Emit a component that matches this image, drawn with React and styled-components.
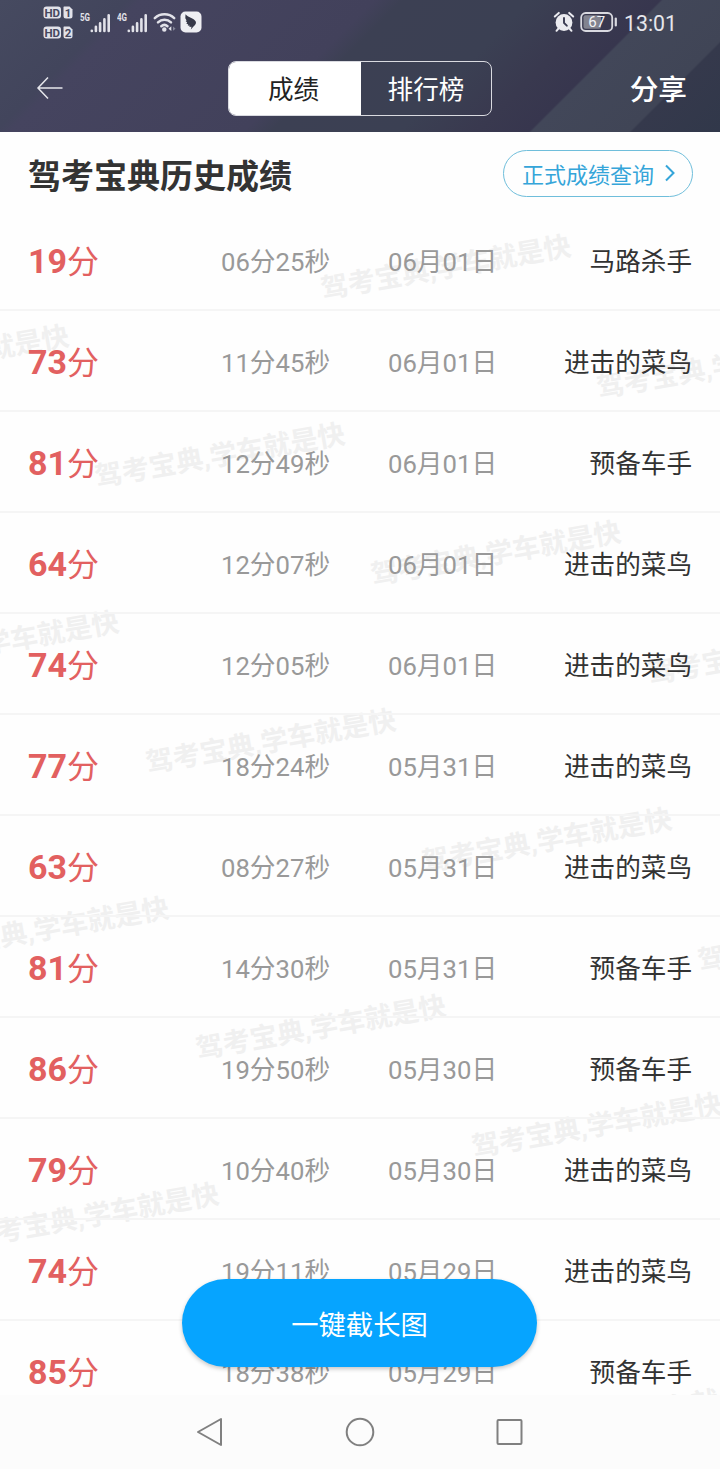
import React from 'react'
import styled, { createGlobalStyle } from 'styled-components'

const GlobalStyle = createGlobalStyle`
* { box-sizing: border-box; }
body { margin: 0; background: #fff; }
button { font: inherit; border: 0; padding: 0; background: none; cursor: pointer; }
`

const Screen = styled.div`
  position: relative;
  display: flex;
  flex-direction: column;
  width: 720px;
  height: 1469px;
  overflow: hidden;
  background: #fefefe;
  color: #333;
  font-family: Roboto, 'Noto Sans CJK SC', sans-serif;
  white-space: nowrap;
`

const Header = styled.header`
  flex: none;
  height: 132px;
  color: #fff;
  background: linear-gradient(
    135deg,
    #464a60 0,
    #42455c 90px,
    #45445f 100px,
    #42415b 265px,
    #3c4053 285px,
    #3b4053 375px,
    #39394f 430px,
    #37364e 467px,
    #424759 469px,
    #404556 538px,
    #35394c 540px,
    #31384a 603px
  );
`

const StatusBar = styled.div`
  display: flex;
  justify-content: space-between;
  height: 44px;
  padding: 0 43px;
`

const StatusGroup = styled.div`
  display: flex;
  align-items: center;
  gap: ${p => p.$gap || 0}px;
`

const HdStack = styled.div`
  display: grid;
  gap: 7px;
  margin-right: 1px;
`

const Clock = styled.span`
  font-size: 21.3px;
  line-height: 40px;
  padding-top: 3px;
  margin-left: 1px;
  width: 53px;
  color: #e6e6ec;
`

const NavBar = styled.div`
  display: grid;
  grid-template-columns: 200px 264px 200px;
  align-items: center;
  height: 88px;
  padding: 0 28px;
`

const BackButton = styled.button`
  display: flex;
  padding-left: 8px;
`

const Share = styled.button`
  justify-self: end;
  margin: 4px 5px 0 0;
  font-size: 28.7px;
  font-weight: 500;
  line-height: 40px;
  color: #fff;
`

const Tabs = styled.div`
  display: flex;
  height: 55px;
  border: 1px solid #d9dae0;
  border-radius: 8px;
  overflow: hidden;
`

const Tab = styled.button`
  width: ${p => (p.$active ? 132 : 130)}px;
  padding-top: 4px;
  padding-right: ${p => (p.$active ? 3 : 0)}px;
  font-size: 25.6px;
  line-height: 49px;
  color: ${p => (p.$active ? '#222' : '#fff')};
  background: ${p => (p.$active ? '#fff' : 'transparent')};
`

const TitleBar = styled.div`
  flex: none;
  display: flex;
  align-items: center;
  justify-content: space-between;
  height: 78px;
  padding: 5px 27px 0 28px;
`

const Title = styled.h1`
  margin: 6px 0 0;
  font-size: 33px;
  line-height: 44px;
  font-weight: 700;
`

const QueryLink = styled.button`
  display: flex;
  align-items: center;
  gap: 10px;
  width: 190px;
  height: 47px;
  padding: 0 0 2px 18px;
  border: 1px solid #6fbedb;
  border-radius: 24px;
  font-size: 22px;
  color: #35a5d9;
`

const List = styled.main`
  position: relative;
  height: 1185px;
  overflow: hidden;
`

const Row = styled.div`
  position: relative;
  display: grid;
  grid-template-columns: 193px 167px 1fr auto;
  align-items: center;
  height: 101px;
  padding: 0 28px 1px;
  border-bottom: 2px solid #f5f5f5;
`

const Score = styled.div`
  display: flex;
  align-items: center;
  font-size: 32px;
  color: #e26060;

  b {
    width: 39px;
    padding-top: 4px;
    font-size: 34px;
  }
`

const Meta = styled.div`
  font-size: 25.7px;
  color: #999;
`

const Rank = styled.div`
  font-size: 25.6px;
  color: #333;
`

/* slanted marks running under the rows */
const Mark = styled.span`
  position: absolute;
  left: ${p => p.$x - 150}px;
  top: ${p => p.$y - 229}px;
  width: 300px;
  height: 40px;
  line-height: 40px;
  text-align: center;
  font-size: 27.4px;
  font-weight: 700;
  color: #f0f0f0;
  transform: rotate(-10deg);
`

const LongShot = styled.button`
  position: absolute;
  left: 182px;
  bottom: 102px;
  width: 355px;
  height: 88px;
  padding-bottom: 1px;
  border-radius: 44px;
  font-size: 27.3px;
  color: #fff;
  background: #06a4ff;
  box-shadow: 0 2px 4px rgba(0, 0, 0, 0.22);
`

const SystemNav = styled.nav`
  flex: none;
  display: flex;
  align-items: center;
  justify-content: center;
  gap: 120px;
  height: 74px;
  background: #fcfcfc;
`

const rows = [
  ['19', '06分25秒', '06月01日', '马路杀手'],
  ['73', '11分45秒', '06月01日', '进击的菜鸟'],
  ['81', '12分49秒', '06月01日', '预备车手'],
  ['64', '12分07秒', '06月01日', '进击的菜鸟'],
  ['74', '12分05秒', '06月01日', '进击的菜鸟'],
  ['77', '18分24秒', '05月31日', '进击的菜鸟'],
  ['63', '08分27秒', '05月31日', '进击的菜鸟'],
  ['81', '14分30秒', '05月31日', '预备车手'],
  ['86', '19分50秒', '05月30日', '预备车手'],
  ['79', '10分40秒', '05月30日', '进击的菜鸟'],
  ['74', '19分11秒', '05月29日', '进击的菜鸟'],
  ['85', '18分38秒', '05月29日', '预备车手'],
]

const marks = [
  [446, 267], [-56, 357], [722, 366], [220, 455], [496, 553], [-6, 643],
  [773, 652], [271, 741], [547, 840], [44, 929], [823, 939], [321, 1027],
  [597, 1125], [94, 1215], [371, 1313], [648, 1412],
]

const HdBadge = ({ n }) => (
  <svg width="31" height="13" viewBox="0 0 31 13">
    <rect x="0.5" y="0.5" width="17.5" height="12" rx="3" fill="#e2e2e9" />
    <path d="M21 .5h5.500l3 3V10a2.500 2.500 0 0 1-2.500 2.500H23A2.500 2.500 0 0 1 20.500 10V1z" fill="#e2e2e9" />
    <text x="9.2" y="10.6" textAnchor="middle" fontSize="11.5" fontWeight="700" fill="#45475f" fontFamily="Roboto">HD</text>
    <text x="25" y="10.6" textAnchor="middle" fontSize="11.5" fontWeight="700" fill="#45475f" fontFamily="Roboto">{n}</text>
  </svg>
)

const Signal = ({ type }) => (
  <svg width="32" height="24" viewBox="0 0 32 24">
    <text x="0" y="11" fontSize="11" fontWeight="700" fill="#e2e2e9" fontFamily="Roboto" textLength="10" lengthAdjust="spacingAndGlyphs">{type}</text>
    <g stroke="#e2e2e9" strokeWidth="2.6" strokeLinecap="round">
      <path d="M11.800 23.200v.2M15.900 19.300v4.100M20.100 15.900v7.500M24.400 11.900v11.500M28.700 7.800v15.600" transform="translate(0 -2.500)" />
    </g>
  </svg>
)

const Wifi = () => (
  <svg width="24" height="22" viewBox="0 0 24 22" fill="none" stroke="#e2e2e9" strokeWidth="2.5" strokeLinecap="round">
    <path d="M1.800 7.200a14.200 14.200 0 0 1 19.400 0M5 11.400a9.600 9.600 0 0 1 13 0M8.300 15.200a4.700 4.700 0 0 1 6.200 0" />
    <circle cx="11.300" cy="18.500" r="1" fill="#e2e2e9" />
    <path d="M18.300 15.300l-2.800 2.500 2.800 2.300z" fill="#e2e2e9" stroke="none" />
    <path d="M20 15.500l2.600 2.300-2.600 2z" fill="#85879a" stroke="none" />
  </svg>
)

const BirdBadge = () => (
  <svg width="22" height="22" viewBox="0 0 22 22">
    <rect x="0.5" y="0.5" width="21" height="21" rx="5" fill="#eeeef2" />
    <path d="M5.500 3.200C7.800 6 14 7.400 15.600 10.200c.7 1.300.4 2.500-.6 3.700l-1.500 1.700-2.700 2.800.7-2.700-2.300.4.700-1.300-2.200-.2.600-1.200-2-.8.900-1-1.600-1.600 1-.5-1.300-2.300z" fill="#363848" />
  </svg>
)

const Alarm = () => (
  <svg width="22" height="22" viewBox="0 0 22 22">
    <circle cx="11" cy="11.5" r="8.4" fill="#ebebf0" />
    <path d="M1.800 5.500l4-3.600M20.200 5.500l-4-3.600M5.500 17.500l-2 2.300M16.500 17.500l2 2.300" stroke="#ebebf0" strokeWidth="2" strokeLinecap="round" />
    <path d="M11 7v4.800l2.800 2.900" stroke="#393a51" strokeWidth="1.9" fill="none" strokeLinecap="round" />
  </svg>
)

const Battery = () => (
  <svg width="38" height="22" viewBox="0 0 38 22">
    <rect x="1.2" y="2" width="31" height="18" rx="4.5" fill="none" stroke="#d9d9e0" strokeWidth="1.8" />
    <rect x="3.5" y="4.2" width="17.5" height="13.6" rx="2" fill="#82838f" />
    <path d="M35.800 7.500v7" stroke="#d9d9e0" strokeWidth="2.2" strokeLinecap="round" />
    <text x="16.700" y="16.300" textAnchor="middle" fontSize="15" fill="#f2f2f5" fontFamily="Roboto">67</text>
  </svg>
)

const App = () => {
  return (
    <Screen>
      <GlobalStyle />
      <Header>
        <StatusBar>
          <StatusGroup $gap={4}>
            <StatusGroup $gap={5}>
              <HdStack>
                <HdBadge n="1" />
                <HdBadge n="2" />
              </HdStack>
              <Signal type="5G" />
              <Signal type="4G" />
            </StatusGroup>
            <StatusGroup $gap={3}>
              <Wifi />
              <BirdBadge />
            </StatusGroup>
          </StatusGroup>
          <StatusGroup $gap={5}>
            <Alarm />
            <Battery />
            <Clock>13:01</Clock>
          </StatusGroup>
        </StatusBar>

        <NavBar>
          <BackButton>
            <svg width="28" height="24" viewBox="0 0 28 24" fill="none" stroke="#e6e6ec" strokeWidth="1.5">
              <path d="M12 1.500L2 12l10 10.500M2 12h24.500" />
            </svg>
          </BackButton>
          <Tabs>
            <Tab $active>成绩</Tab>
            <Tab>排行榜</Tab>
          </Tabs>
          <Share>分享</Share>
        </NavBar>
      </Header>

      <TitleBar>
        <Title>驾考宝典历史成绩</Title>
        <QueryLink>
          正式成绩查询
          <svg width="12" height="18" viewBox="0 0 12 18" fill="none" stroke="#35a5d9" strokeWidth="2">
            <path d="M2 1.500L9.500 9 2 16.500" />
          </svg>
        </QueryLink>
      </TitleBar>

      <List>
        {marks.map(([x, y]) => (
          <Mark key={`${x}-${y}`} $x={x} $y={y}>驾考宝典,学车就是快</Mark>
        ))}
        {rows.map(([score, time, date, rank], i) => (
          <Row key={i}>
            <Score><b>{score}</b>分</Score>
            <Meta>{time}</Meta>
            <Meta>{date}</Meta>
            <Rank>{rank}</Rank>
          </Row>
        ))}
      </List>

      <LongShot>一键截长图</LongShot>

      <SystemNav>
        <svg width="30" height="30" viewBox="0 0 30 30" fill="none" stroke="#808080" strokeWidth="2" strokeLinejoin="round">
          <path d="M26 2v26L3 15z" />
        </svg>
        <svg width="30" height="30" viewBox="0 0 30 30" fill="none" stroke="#808080" strokeWidth="2">
          <circle cx="15" cy="15" r="13.300" />
        </svg>
        <svg width="30" height="30" viewBox="0 0 30 30" fill="none" stroke="#808080" strokeWidth="2">
          <rect x="2.500" y="3" width="24" height="24" rx="1" />
        </svg>
      </SystemNav>
    </Screen>
  )
}

export default App
